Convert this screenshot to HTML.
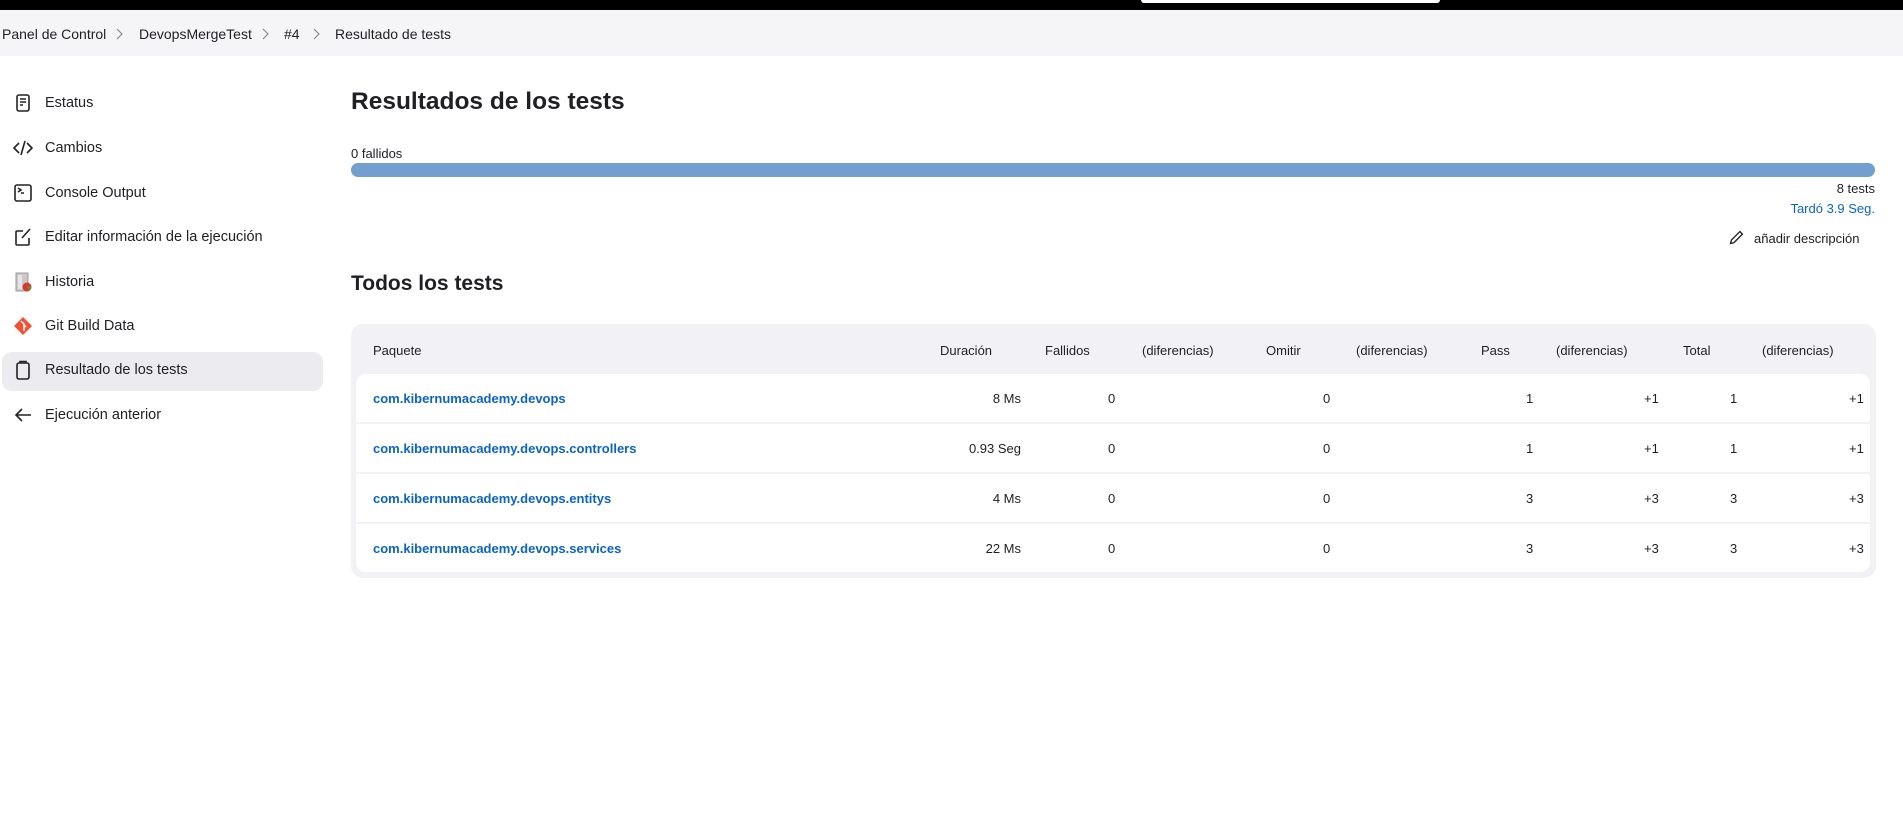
<!DOCTYPE html>
<html><head><meta charset="utf-8"><style>
*{margin:0;padding:0;box-sizing:border-box}
body{width:1903px;height:832px;background:#fff;font-family:"Liberation Sans",sans-serif;color:#1f1f24;position:relative;overflow:hidden}
.a{position:absolute;white-space:nowrap}
.top{position:absolute;left:0;top:0;width:1903px;height:10px;background:#000}
.pill{position:absolute;left:1141px;top:0;width:299px;height:3px;background:#fff;border-radius:0 0 4px 4px}
.bc{position:absolute;left:0;top:10px;width:1903px;height:46px;background:#f5f5f7;font-size:14px}
.nav{font-size:14.5px;color:#1f1f24}
.ic{position:absolute;left:13px;width:20px;height:20px}
.act{position:absolute;left:2px;top:352px;width:321px;height:39px;background:#ebebf0;border-radius:10px}
.tbl{position:absolute;left:351px;top:324px;width:1525px;height:254px;background:#f2f2f6;border-radius:12px}
.row{position:absolute;left:356px;width:1514px;height:48px;background:#fff}
.h{font-size:13px;top:343px}
.lk{color:#0b63c5;font-weight:bold;font-size:13px}
.r{transform:translateX(-100%)}
.chev{position:absolute;top:18px}
</style></head><body>
<div class="top"></div><div class="pill"></div>
<div class="bc">
<span class="a" style="left:2px;top:16px">Panel de Control</span>
<svg class="chev" style="left:115px" width="8" height="12" viewBox="0 0 8 12" fill="none" stroke="#888" stroke-width="1.2"><path d="M2 1l5 5-5 5"/></svg>
<span class="a" style="left:139px;top:16px">DevopsMergeTest</span>
<svg class="chev" style="left:261px" width="8" height="12" viewBox="0 0 8 12" fill="none" stroke="#888" stroke-width="1.2"><path d="M2 1l5 5-5 5"/></svg>
<span class="a" style="left:284px;top:16px">#4</span>
<svg class="chev" style="left:312px" width="8" height="12" viewBox="0 0 8 12" fill="none" stroke="#888" stroke-width="1.2"><path d="M2 1l5 5-5 5"/></svg>
<span class="a" style="left:335px;top:16px">Resultado de tests</span>
</div>
<div class="act"></div>
<svg class="ic" style="top:93px" viewBox="0 0 20 20" fill="none" stroke="#222" stroke-width="1.6"><rect x="4" y="2" width="12" height="16" rx="2"/><path d="M7 6h6M7 9h6M7 12h3"/></svg>
<span class="a nav" style="left:45px;top:95px">Estatus</span>
<svg class="ic" style="top:138px" viewBox="0 0 20 20" fill="none" stroke="#222" stroke-width="1.6"><path d="M6 5l-5 5 5 5M14 5l5 5-5 5M12 3l-4 14"/></svg>
<span class="a nav" style="left:45px;top:140px">Cambios</span>
<svg class="ic" style="top:183px" viewBox="0 0 20 20" fill="none" stroke="#222" stroke-width="1.6"><rect x="2" y="2" width="16" height="16" rx="2"/><path d="M5 5l3 2-3 2M8 10h3"/></svg>
<span class="a nav" style="left:45px;top:185px">Console Output</span>
<svg class="ic" style="top:227px" viewBox="0 0 20 20" fill="none" stroke="#222" stroke-width="1.6"><path d="M10 4H4a1 1 0 0 0-1 1v12a1 1 0 0 0 1 1h11a1 1 0 0 0 1-1v-6M9 11l8-9"/></svg>
<span class="a nav" style="left:45px;top:229px">Editar información de la ejecución</span>
<svg class="ic" style="top:272px" viewBox="0 0 20 20"><rect x="3" y="1" width="12" height="18" fill="#c8c8c8" stroke="#999"/><rect x="5" y="3" width="4" height="14" fill="#e5e5e5"/><circle cx="14" cy="15" r="4.5" fill="#d33"/><path d="M14 15l4-1a4 4 0 0 1-2 4z" fill="#3a3"/></svg>
<span class="a nav" style="left:45px;top:274px">Historia</span>
<svg class="ic" style="top:316px" viewBox="0 0 20 20"><path d="M10 1l9 9-9 9-9-9z" fill="#f05133"/><path d="M8 5l3 3v7M11 9l2 2" stroke="#fff" stroke-width="1.5" fill="none"/></svg>
<span class="a nav" style="left:45px;top:318px">Git Build Data</span>
<svg class="ic" style="top:360px" viewBox="0 0 20 20" fill="none" stroke="#222" stroke-width="1.6"><rect x="4" y="3" width="12" height="16" rx="2"/><path d="M7 3V1.5h6V3"/></svg>
<span class="a nav" style="left:45px;top:362px">Resultado de los tests</span>
<svg class="ic" style="top:405px" viewBox="0 0 20 20" fill="none" stroke="#222" stroke-width="1.6"><path d="M18 10H3M9 4l-6 6 6 6"/></svg>
<span class="a nav" style="left:45px;top:407px">Ejecución anterior</span>

<span class="a" style="left:351px;top:88px;font-size:24.5px;font-weight:bold">Resultados de los tests</span>
<span class="a" style="left:351px;top:146px;font-size:13px">0 fallidos</span>
<div class="a" style="left:351px;top:163px;width:1524px;height:14px;background:#729fcf;border-radius:7px"></div>
<span class="a" style="right:28px;top:181px;font-size:13px">8 tests</span>
<span class="a" style="right:28px;top:201px;font-size:13px;color:#0b63c5">Tardó 3.9 Seg.</span>
<svg class="a" style="left:1728px;top:229px" width="17" height="17" viewBox="0 0 20 20" fill="none" stroke="#222" stroke-width="1.6"><path d="M3 17l1-4L14 3l3 3L7 16z"/></svg>
<span class="a" style="left:1754px;top:231px;font-size:13px">añadir descripción</span>
<span class="a" style="left:351px;top:272px;font-size:21px;font-weight:bold">Todos los tests</span>

<div class="tbl"></div>
<div class="row" style="top:374px;border-radius:10px 10px 0 0"></div>
<div class="row" style="top:424px"></div>
<div class="row" style="top:474px"></div>
<div class="row" style="top:524px;border-radius:0 0 10px 10px"></div>
<span class="a h" style="left:373px">Paquete</span>
<span class="a h" style="left:940px">Duración</span>
<span class="a h" style="left:1045px">Fallidos</span>
<span class="a h" style="left:1142px">(diferencias)</span>
<span class="a h" style="left:1266px">Omitir</span>
<span class="a h" style="left:1356px">(diferencias)</span>
<span class="a h" style="left:1481px">Pass</span>
<span class="a h" style="left:1556px">(diferencias)</span>
<span class="a h" style="left:1683px">Total</span>
<span class="a h" style="left:1762px">(diferencias)</span>

<span class="a lk" style="left:373px;top:391px">com.kibernumacademy.devops</span>
<span class="a lk" style="left:373px;top:441px">com.kibernumacademy.devops.controllers</span>
<span class="a lk" style="left:373px;top:491px">com.kibernumacademy.devops.entitys</span>
<span class="a lk" style="left:373px;top:541px">com.kibernumacademy.devops.services</span>

<div style="position:absolute;left:0;top:391px;font-size:13px">
<span class="a r" style="left:1021px;top:0">8 Ms</span><span class="a r" style="left:1021px;top:50px">0.93 Seg</span><span class="a r" style="left:1021px;top:100px">4 Ms</span><span class="a r" style="left:1021px;top:150px">22 Ms</span>
<span class="a" style="left:1108px;top:0">0</span><span class="a" style="left:1108px;top:50px">0</span><span class="a" style="left:1108px;top:100px">0</span><span class="a" style="left:1108px;top:150px">0</span>
<span class="a" style="left:1323px;top:0">0</span><span class="a" style="left:1323px;top:50px">0</span><span class="a" style="left:1323px;top:100px">0</span><span class="a" style="left:1323px;top:150px">0</span>
<span class="a" style="left:1526px;top:0">1</span><span class="a" style="left:1526px;top:50px">1</span><span class="a" style="left:1526px;top:100px">3</span><span class="a" style="left:1526px;top:150px">3</span>
<span class="a" style="left:1644px;top:0">+1</span><span class="a" style="left:1644px;top:50px">+1</span><span class="a" style="left:1644px;top:100px">+3</span><span class="a" style="left:1644px;top:150px">+3</span>
<span class="a" style="left:1730px;top:0">1</span><span class="a" style="left:1730px;top:50px">1</span><span class="a" style="left:1730px;top:100px">3</span><span class="a" style="left:1730px;top:150px">3</span>
<span class="a" style="left:1849px;top:0">+1</span><span class="a" style="left:1849px;top:50px">+1</span><span class="a" style="left:1849px;top:100px">+3</span><span class="a" style="left:1849px;top:150px">+3</span>
</div>
</body></html>
